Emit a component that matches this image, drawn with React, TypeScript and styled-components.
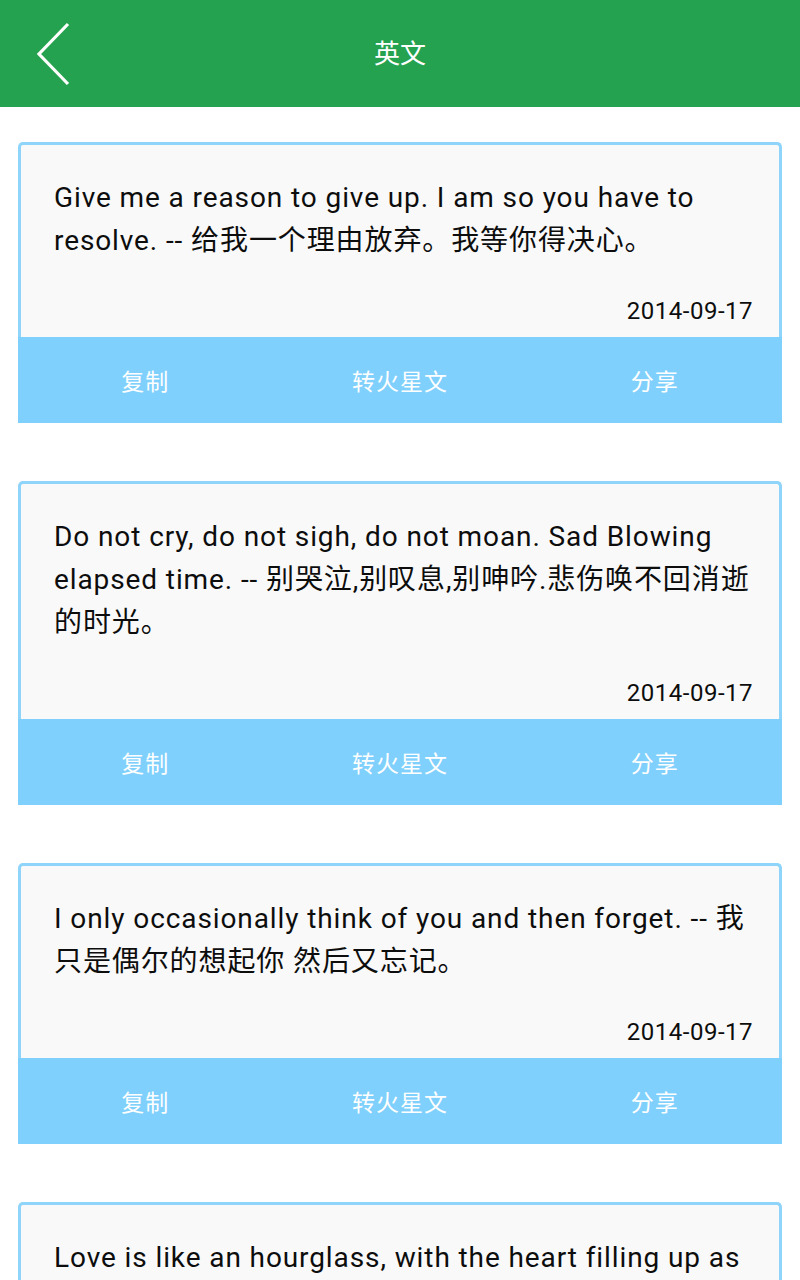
import React from "react";
import styled, { createGlobalStyle } from "styled-components";

const GlobalStyle = createGlobalStyle`
  body {
    margin: 0;
    background: #ffffff;
    font-family: Roboto, "Noto Sans CJK SC", sans-serif;
  }
`;

interface Quote {
  text: string;
  date: string;
}

const quotes: Quote[] = [
  {
    text: "Give me a reason to give up. I am so you have to resolve. -- 给我一个理由放弃。我等你得决心。",
    date: "2014-09-17",
  },
  {
    text: "Do not cry, do not sigh, do not moan. Sad Blowing elapsed time. -- 别哭泣,别叹息,别呻吟.悲伤唤不回消逝的时光。",
    date: "2014-09-17",
  },
  {
    text: "I only occasionally think of you and then forget. -- 我只是偶尔的想起你 然后又忘记。",
    date: "2014-09-17",
  },
  {
    text: "Love is like an hourglass, with the heart filling up as the brain empties. -- 爱情就像沙漏，心满了，脑子就空了。",
    date: "2014-09-17",
  },
];

const Page = styled.div`
  width: 800px;
  height: 1280px;
  overflow: hidden;
`;

const Header = styled.header`
  height: 107px;
  background: #25a24f;
  display: flex;
  align-items: center;
  justify-content: center;
  position: relative;
`;

const BackButton = styled.button`
  position: absolute;
  left: 30px;
  top: 20px;
  width: 46px;
  height: 68px;
  padding: 0;
  border: none;
  background: transparent;
  display: flex;
  align-items: center;
  justify-content: center;
`;

const Title = styled.h1`
  margin: -4px 0 0;
  color: #ffffff;
  font-size: 26px;
  font-weight: 400;
`;

const List = styled.div`
  display: flex;
  flex-direction: column;
  gap: 58px;
  padding: 35px 18px 40px;
`;

const Card = styled.div`
  display: flex;
  flex-direction: column;
`;

const Body = styled.div`
  background: #f9f9f9;
  border: 3px solid #8fd4fb;
  border-bottom: none;
  border-radius: 5px 5px 0 0;
  padding: 31px 19px 11px 33px;
`;

const Text = styled.p`
  margin: 0;
  font-size: 28px;
  letter-spacing: 0.9px;
  line-height: 43px;
  color: #0d0d0d;
`;

const Date = styled.div`
  margin-top: 34px;
  text-align: right;
  padding-right: 7px;
  font-size: 24px;
  letter-spacing: 0.5px;
  line-height: 30px;
  color: #0d0d0d;
`;

const Actions = styled.div`
  height: 86px;
  background: #80d0fd;
  display: grid;
  grid-template-columns: repeat(3, 1fr);
`;

const Action = styled.button`
  border: none;
  background: transparent;
  color: #ffffff;
  font-family: Roboto, "Noto Sans CJK SC", sans-serif;
  font-size: 23px;
  letter-spacing: 1px;
  padding: 0;
  display: flex;
  align-items: center;
  justify-content: center;
`;

const BackIcon = () => (
  <svg width="46" height="68" viewBox="0 0 46 68">
    <polyline
      points="38,4 9,34 38,64"
      fill="none"
      stroke="#ffffff"
      strokeWidth="3.2"
    />
  </svg>
);

export default function App() {
  return (
    <Page>
      <GlobalStyle />
      <Header>
        <BackButton aria-label="back">
          <BackIcon />
        </BackButton>
        <Title>英文</Title>
      </Header>
      <List>
        {quotes.map((q, i) => (
          <Card key={i}>
            <Body>
              <Text>{q.text}</Text>
              <Date>{q.date}</Date>
            </Body>
            <Actions>
              <Action>复制</Action>
              <Action>转火星文</Action>
              <Action>分享</Action>
            </Actions>
          </Card>
        ))}
      </List>
    </Page>
  );
}
